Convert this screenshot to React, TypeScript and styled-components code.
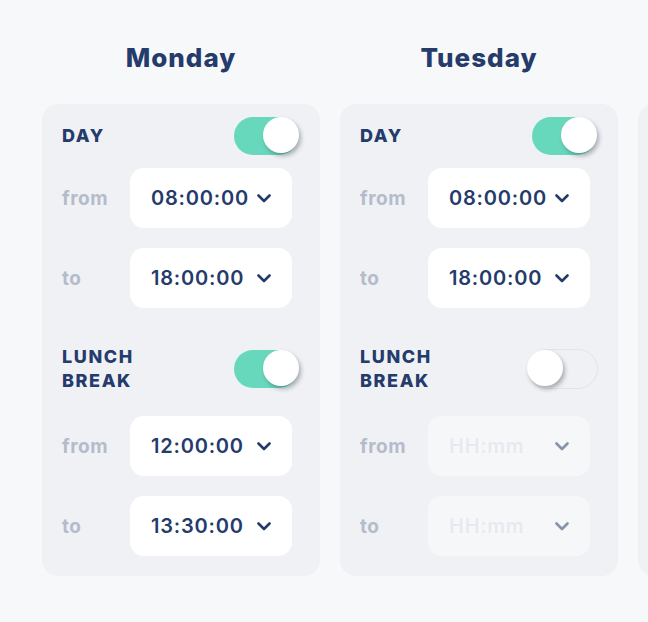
import React from "react";
import styled, { createGlobalStyle } from "styled-components";

const Global = createGlobalStyle`
  html, body { margin: 0; padding: 0; }
  body {
    background: #f7f8fa;
    font-family: Inter, "Noto Sans", sans-serif;
    color: #243b6b;
    width: 648px;
    height: 622px;
    overflow: hidden;
  }
`;

const Page = styled.div`
  display: flex;
  gap: 20px;
  padding: 40px 0 0 42px;
  overflow: hidden;
  height: 622px;
  box-sizing: border-box;
`;

const Column = styled.div`
  flex: 0 0 278px;
  display: flex;
  flex-direction: column;
`;

const DayTitle = styled.h2`
  margin: 0 0 28px;
  height: 36px;
  line-height: 36px;
  text-align: center;
  font-size: 26px;
  font-weight: 800;
  letter-spacing: 1px;
  color: #243b6b;
`;

const Card = styled.div`
  background: #eff1f5;
  border-radius: 16px;
  padding: 13px 20px 20px;
  display: flex;
  flex-direction: column;
  gap: 37px;
  min-height: 472px;
  box-sizing: border-box;
`;

const Section = styled.div`
  display: flex;
  flex-direction: column;
  gap: 20px;
`;

const SectionHeader = styled.div<{ $after: number }>`
  display: flex;
  align-items: center;
  justify-content: space-between;
  margin-bottom: ${(p) => p.$after - 20}px;
`;

const SectionLabel = styled.div`
  font-size: 18px;
  font-weight: 800;
  line-height: 24px;
  letter-spacing: 1.6px;
  text-transform: uppercase;
  color: #243b6b;
`;

const Track = styled.div<{ $on: boolean }>`
  position: relative;
  width: ${(p) => (p.$on ? 64 : 71)}px;
  height: ${(p) => (p.$on ? 38 : 40)}px;
  border-radius: 20px;
  box-sizing: border-box;
  background: ${(p) => (p.$on ? "#68d8bc" : "transparent")};
  border: ${(p) => (p.$on ? "none" : "1px solid #e1e4ea")};
  margin-right: ${(p) => (p.$on ? 2 : 0)}px;
`;

const Knob = styled.div<{ $on: boolean }>`
  position: absolute;
  top: 0;
  left: ${(p) => (p.$on ? "29px" : "-1px")};
  width: 36px;
  height: 36px;
  border-radius: 50%;
  background: #ffffff;
  box-shadow: 2px 3px 4px rgba(40, 50, 60, 0.35);
`;

const Row = styled.div`
  display: flex;
  align-items: center;
`;

const RowLabel = styled.div`
  width: 68px;
  font-size: 19px;
  font-weight: 700;
  letter-spacing: 0.6px;
  color: #b4bccb;
`;

const Select = styled.div<{ $disabled?: boolean }>`
  width: 162px;
  height: 60px;
  box-sizing: border-box;
  border-radius: 14px;
  background: ${(p) => (p.$disabled ? "#f6f7f9" : "#ffffff")};
  display: flex;
  align-items: center;
  justify-content: space-between;
  padding: 0 21px;
`;

const SelectValue = styled.span<{ $placeholder?: boolean }>`
  font-size: 20px;
  font-weight: ${(p) => (p.$placeholder ? 500 : 600)};
  letter-spacing: 0.8px;
  color: ${(p) => (p.$placeholder ? "#e6e9ef" : "#243b6b")};
`;

const Chevron = ({ color }: { color: string }) => (
  <svg width="14" height="9" viewBox="0 0 14 9" fill="none">
    <path d="M1.5 1.5 L7 7 L12.5 1.5" stroke={color} strokeWidth="2.6" strokeLinecap="round" strokeLinejoin="round" />
  </svg>
);

const Toggle = ({ on }: { on: boolean }) => (
  <Track $on={on}>
    <Knob $on={on} />
  </Track>
);

const TimeRow = ({ label, value }: { label: string; value?: string }) => (
  <Row>
    <RowLabel>{label}</RowLabel>
    <Select $disabled={!value}>
      <SelectValue $placeholder={!value}>{value ?? "HH:mm"}</SelectValue>
      <Chevron color={value ? "#243b6b" : "#8793a8"} />
    </Select>
  </Row>
);

type Day = {
  name: string;
  day: [string?, string?];
  dayOn: boolean;
  lunch: [string?, string?];
  lunchOn: boolean;
};

const days: Day[] = [
  { name: "Monday", dayOn: true, day: ["08:00:00", "18:00:00"], lunchOn: true, lunch: ["12:00:00", "13:30:00"] },
  { name: "Tuesday", dayOn: true, day: ["08:00:00", "18:00:00"], lunchOn: false, lunch: [undefined, undefined] },
];

export default function App() {
  return (
    <>
      <Global />
      <Page>
        {days.map((d) => (
          <Column key={d.name}>
            <DayTitle>{d.name}</DayTitle>
            <Card>
              <Section>
                <SectionHeader $after={13}>
                  <SectionLabel>Day</SectionLabel>
                  <Toggle on={d.dayOn} />
                </SectionHeader>
                <TimeRow label="from" value={d.day[0]} />
                <TimeRow label="to" value={d.day[1]} />
              </Section>
              <Section>
                <SectionHeader $after={23}>
                  <SectionLabel>
                    Lunch
                    <br />
                    Break
                  </SectionLabel>
                  <Toggle on={d.lunchOn} />
                </SectionHeader>
                <TimeRow label="from" value={d.lunch[0]} />
                <TimeRow label="to" value={d.lunch[1]} />
              </Section>
            </Card>
          </Column>
        ))}
        <Column aria-hidden>
          <DayTitle />
          <Card />
        </Column>
      </Page>
    </>
  );
}
